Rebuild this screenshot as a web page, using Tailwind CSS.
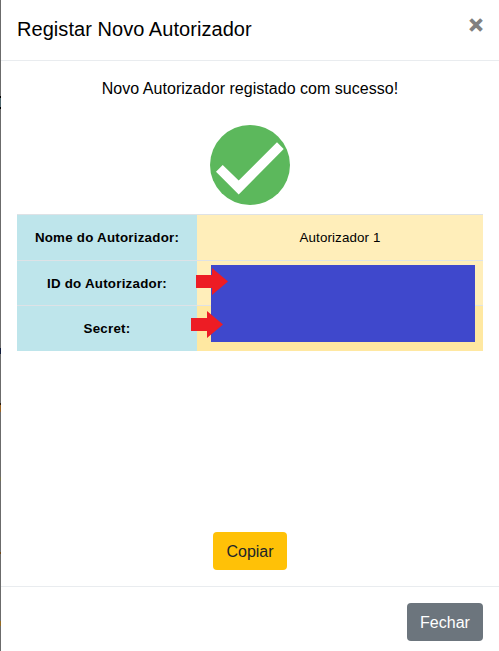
<!DOCTYPE html>
<html lang="pt">
<head>
<meta charset="utf-8">
<title>Registar Novo Autorizador</title>
<script src="https://cdn.jsdelivr.net/npm/@tailwindcss/browser@4"></script>
</head>
<body class="flex h-[651px] w-[499px] overflow-hidden bg-white font-['Liberation_Sans',Arial,sans-serif] text-base text-black">
<!-- Sliver of the dimmed page behind the dialog -->
<div class="flex w-px shrink-0 flex-col bg-[#6b6b6b]" aria-hidden="true">
  <i class="mt-[96px] h-[2px] bg-black"></i>
  <i class="h-[9px] bg-[#50686f]"></i>
  <i class="h-[2px] bg-black"></i>
  <i class="mt-[239px] h-[6px] bg-[#111c3c]"></i>
  <i class="mt-[49px] h-[2px] bg-[#2b1c0c]"></i>
  <i class="h-[7px] bg-[#9b6526]"></i>
  <i class="mt-[65px] h-[4px] bg-[#76724f]"></i>
  <i class="mt-[71px] h-[2px] bg-[#704818]"></i>
  <i class="mt-[67px] h-[5px] bg-[#946b24]"></i>
</div>
<div class="flex w-[498px] flex-col">
  <header class="flex h-[61px] shrink-0 items-start justify-between border-b border-[#e9ecef] px-4">
    <h1 class="mt-[14px] text-[20px] leading-[30px] tracking-[0.05px]">Registar Novo Autorizador</h1>
    <button class="mt-[13px] text-[24px] leading-[24px] font-bold text-[#808080] [-webkit-text-stroke:1px_#808080]" aria-label="Fechar">×</button>
  </header>
  <main class="flex h-[525px] shrink-0 flex-col items-center px-4 pt-4">
    <p class="leading-6 tracking-[0.03px]">Novo Autorizador registado com sucesso!</p>
    <svg class="mt-6 size-20 shrink-0" viewBox="0 0 80 80">
      <circle cx="40" cy="40" r="40" fill="#5cb85c"/>
      <path d="M6 46.7L12.7 40L28.7 55.5L67 17.2L73.7 24L28.7 69.5Z" fill="#fff"/>
    </svg>
    <div class="relative mt-[9px] w-full">
      <table class="w-full table-fixed border-collapse text-center text-[13.33px] leading-5">
        <colgroup><col class="w-[180px]"><col></colgroup>
        <tbody>
          <tr class="h-[46px] border-t border-[#dee2e6]"><th class="bg-[#bee5eb] font-bold tracking-[0.24px]">Nome do Autorizador:</th><td class="bg-[#ffeeba] tracking-[0.12px]">Autorizador 1</td></tr>
          <tr class="h-[45px] border-t border-[#dee2e6]"><th class="bg-[#bee5eb] pt-[2px] font-bold tracking-[0.24px]">ID do Autorizador:</th><td class="bg-[#ffeeba]"></td></tr>
          <tr class="h-[45px] border-t border-[#dee2e6]"><th class="bg-[#bee5eb] pt-px font-bold tracking-[0.24px]">Secret:</th><td class="bg-[#ffe8a1]"></td></tr>
        </tbody>
      </table>
      <!-- Redaction block and arrows laid over the table -->
      <div class="absolute top-[51px] left-[194px] h-[77px] w-[264px] bg-[#3f48cc]"></div>
      <svg class="absolute top-[54px] left-[179px] h-[27px] w-8" viewBox="0 0 32 27"><path d="M0 7H16V0L32 13.5L16 27V20H0Z" fill="#ed1c24"/></svg>
      <svg class="absolute top-[97px] left-[174px] h-[27px] w-8" viewBox="0 0 32 27"><path d="M0 7H16V0L32 13.5L16 27V20H0Z" fill="#ed1c24"/></svg>
    </div>
    <button class="mt-auto mb-4 h-[38px] w-[74px] shrink-0 rounded bg-[#ffc107] pt-[2px] text-[#212529]">Copiar</button>
  </main>
  <footer class="flex flex-1 justify-end border-t border-[#e9ecef] px-4 pt-4">
    <button class="h-[38px] w-[76px] rounded bg-[#6c757d] pt-[2px] text-white">Fechar</button>
  </footer>
</div>
</body>
</html>
